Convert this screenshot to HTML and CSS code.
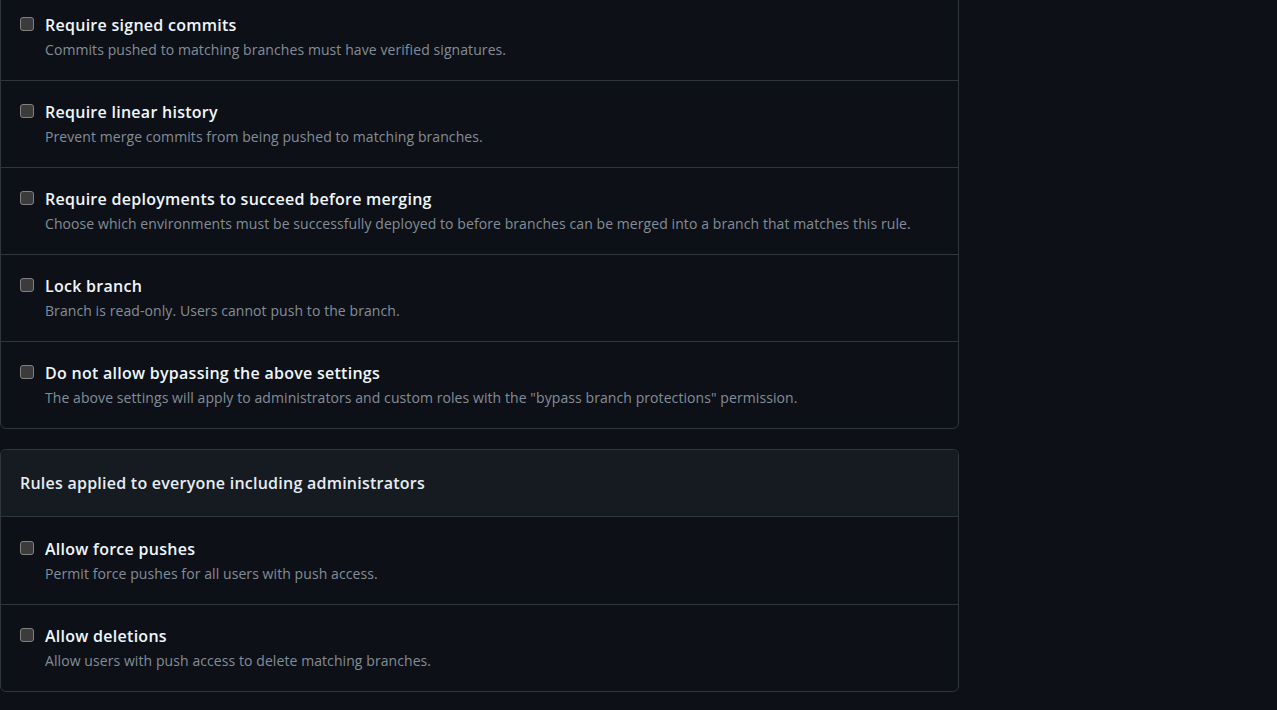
FILE: index.html
```html
<!DOCTYPE html>
<html lang="en">
<head>
<meta charset="utf-8">
<title>Branch protection rules</title>
<link rel="stylesheet" href="styles.css">
</head>
<body>
<div class="page">
  <div class="box box-first">
    <div class="row">
      <span class="check"></span>
      <div class="text">
        <div class="title">Require signed commits</div>
        <div class="desc">Commits pushed to matching branches must have verified signatures.</div>
      </div>
    </div>
    <div class="row">
      <span class="check"></span>
      <div class="text">
        <div class="title">Require linear history</div>
        <div class="desc">Prevent merge commits from being pushed to matching branches.</div>
      </div>
    </div>
    <div class="row">
      <span class="check"></span>
      <div class="text">
        <div class="title">Require deployments to succeed before merging</div>
        <div class="desc">Choose which environments must be successfully deployed to before branches can be merged into a branch that matches this rule.</div>
      </div>
    </div>
    <div class="row">
      <span class="check"></span>
      <div class="text">
        <div class="title">Lock branch</div>
        <div class="desc">Branch is read-only. Users cannot push to the branch.</div>
      </div>
    </div>
    <div class="row">
      <span class="check"></span>
      <div class="text">
        <div class="title">Do not allow bypassing the above settings</div>
        <div class="desc">The above settings will apply to administrators and custom roles with the "bypass branch protections" permission.</div>
      </div>
    </div>
  </div>

  <div class="box">
    <div class="box-header">Rules applied to everyone including administrators</div>
    <div class="row">
      <span class="check"></span>
      <div class="text">
        <div class="title">Allow force pushes</div>
        <div class="desc">Permit force pushes for all users with push access.</div>
      </div>
    </div>
    <div class="row">
      <span class="check"></span>
      <div class="text">
        <div class="title">Allow deletions</div>
        <div class="desc">Allow users with push access to delete matching branches.</div>
      </div>
    </div>
  </div>
</div>
</body>
</html>
```

FILE: styles.css
```css
html, body {
  margin: 0;
  padding: 0;
  background: #0d1117;
}

body {
  font-family: "Open Sans", "Noto Sans", sans-serif;
  color: #e6edf3;
  height: 710px;
  overflow: hidden;
}

.page {
  width: 959px;
  margin-top: -7px;
  display: flex;
  flex-direction: column;
  gap: 20px;
}

.box {
  border: 1px solid #30363d;
  border-radius: 6px;
  background: #0d1117;
}

.box-first {
  border-top-left-radius: 0;
  border-top-right-radius: 0;
}

.box-header {
  background: #161b22;
  border-bottom: 1px solid #30363d;
  border-radius: 6px 6px 0 0;
  padding: 21px 19px;
  font-size: 16px;
  line-height: 24px;
  font-weight: 600;
  letter-spacing: 0.24px;
}

.row {
  display: flex;
  align-items: flex-start;
  gap: 11px;
  padding: 19px 19px 20px;
}

.box-header + .row {
  padding-top: 20px;
}

.row + .row {
  border-top: 1px solid #30363d;
}

.check {
  flex: none;
  width: 12px;
  height: 12px;
  margin-top: 4px;
  background: #3b3b3b;
  border: 1px solid #808080;
  border-radius: 3px;
}

.title {
  font-size: 16px;
  line-height: 24px;
  font-weight: 600;
  letter-spacing: 0.27px;
  color: #f0f6fc;
}

.desc {
  font-size: 14px;
  line-height: 21px;
  margin-top: 2px;
  letter-spacing: 0.08px;
  color: #848d97;
}
```
